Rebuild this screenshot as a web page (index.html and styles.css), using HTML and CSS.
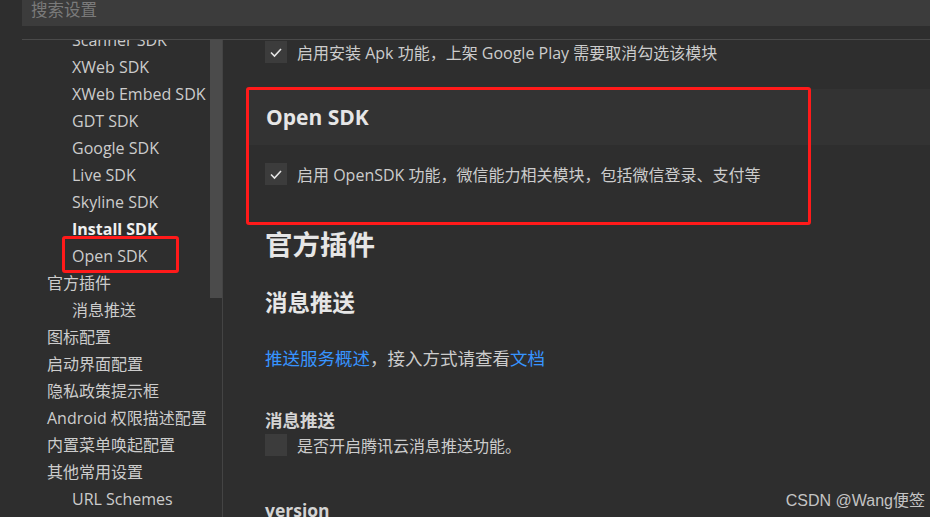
FILE: index.html
```html
<!DOCTYPE html>
<html lang="zh-CN">
<head>
    <meta charset="UTF-8">
    <meta name="viewport" content="width=device-width, initial-scale=1.0">
    <title>设置</title>
    <link rel="stylesheet" href="styles.css">
</head>
<body>
    <div class="search"><span class="placeholder">搜索设置</span></div>
    <div class="main">
        <div class="sidebar">
            <ul class="tree">
                <li class="sub">Scanner SDK</li>
                <li class="sub">XWeb SDK</li>
                <li class="sub">XWeb Embed SDK</li>
                <li class="sub">GDT SDK</li>
                <li class="sub">Google SDK</li>
                <li class="sub">Live SDK</li>
                <li class="sub">Skyline SDK</li>
                <li class="sub active">Install SDK</li>
                <li class="sub">Open SDK</li>
                <li>官方插件</li>
                <li class="sub">消息推送</li>
                <li>图标配置</li>
                <li>启动界面配置</li>
                <li>隐私政策提示框</li>
                <li>Android 权限描述配置</li>
                <li>内置菜单唤起配置</li>
                <li>其他常用设置</li>
                <li class="sub">URL Schemes</li>
            </ul>
        </div>
        <div class="scrollbar"><div class="thumb"></div></div>
        <div class="content">
            <div class="check-row first">
                <span class="box">
                    <svg width="22" height="22" viewBox="0 0 22 22"><polyline points="6,11.5 9.5,15 16,8" fill="none" stroke="#e6e6e6" stroke-width="1.6"/></svg>
                </span>
                <span>启用安装 Apk 功能，上架 Google Play 需要取消勾选该模块</span>
            </div>

            <div class="group">
                <div class="group-head">Open SDK</div>
                <div class="check-row">
                    <span class="box">
                        <svg width="22" height="22" viewBox="0 0 22 22"><polyline points="6,11.5 9.5,15 16,8" fill="none" stroke="#e6e6e6" stroke-width="1.6"/></svg>
                    </span>
                    <span>启用 OpenSDK 功能，微信能力相关模块，包括微信登录、支付等</span>
                </div>
            </div>

            <h1 class="h-big">官方插件</h1>
            <h2 class="h-mid">消息推送</h2>
            <p class="desc"><a href="#">推送服务概述</a>，接入方式请查看<a href="#">文档</a></p>
            <h3 class="h-small">消息推送</h3>
            <div class="check-row">
                <span class="box"></span>
                <span>是否开启腾讯云消息推送功能。</span>
            </div>
            <h3 class="h-small version">version</h3>
        </div>
    </div>

    <div class="mark mark-side"></div>
    <div class="mark mark-group"></div>
    <div class="watermark">CSDN @Wang便签</div>
</body>
</html>
```

FILE: styles.css
```css
* {
    margin: 0;
    padding: 0;
    box-sizing: border-box;
}
body {
    background: #2e2e2e;
    color: #cccccc;
    font-family: "Open Sans", "Noto Sans CJK SC", sans-serif;
    font-size: 16px;
    height: 517px;
    overflow: hidden;
    position: relative;
}
.search {
    margin-left: 22px;
    height: 26px;
    background: #3c3c3c;
    padding-left: 9px;
    line-height: 20px;
}
.placeholder {
    color: #7a7a7a;
    font-size: 16.5px;
}
.main {
    display: flex;
    margin-top: 13px;
    margin-left: 22px;
    border-top: 1px solid #4a4a4a;
    height: 478px;
}
.sidebar {
    margin-left: -22px;
    padding-left: 22px;
    overflow: hidden;
    width: 210px;
}
.tree {
    list-style: none;
    margin-top: -13px;
}
.tree li {
    height: 27px;
    line-height: 27px;
    padding-left: 25px;
    white-space: nowrap;
    color: #cccccc;
}
.tree li.sub {
    padding-left: 50px;
}
.tree li.active {
    font-weight: 700;
    color: #f0f0f0;
}
.scrollbar {
    width: 13px;
    border-right: 1px solid #444;
}
.thumb {
    height: 258px;
    width: 12px;
    background: #4b4b4b;
}
.content {
    flex: 1;
    padding-left: 42px;
    overflow: hidden;
}
.check-row {
    display: flex;
    align-items: center;
    gap: 10px;
    height: 22px;
    white-space: nowrap;
    color: #cccccc;
}
.check-row.first {
    margin-top: 1px;
}
.box {
    width: 22px;
    height: 22px;
    background: #3c3c3c;
    flex: none;
    display: flex;
}
.group {
    margin-top: 26px;
    margin-left: -17px;
    padding-left: 17px;
    padding-bottom: 39px;
}
.group-head {
    height: 56px;
    line-height: 56px;
    margin-left: -17px;
    padding-left: 18px;
    background: #333333;
    font-size: 21px;
    font-weight: 700;
    color: #e6e6e6;
    margin-bottom: 18px;
}
.h-big {
    margin-top: 4px;
    font-size: 27.5px;
    line-height: 34px;
    font-weight: 700;
    color: #e6e6e6;
}
.h-mid {
    margin-top: 26px;
    font-size: 22.5px;
    line-height: 30px;
    font-weight: 700;
    color: #e6e6e6;
}
.desc {
    margin-top: 28px;
    font-size: 17.5px;
    line-height: 24px;
    color: #cccccc;
}
.desc a {
    color: #3794ff;
    text-decoration: none;
}
.h-small {
    margin-top: 39px;
    font-size: 17.5px;
    line-height: 22px;
    font-weight: 700;
    color: #d4d4d4;
    margin-bottom: 3px;
}
.h-small.version {
    margin-top: 43px;
}
.mark {
    position: absolute;
    border: 3px solid #ff1a1a;
    border-radius: 3px;
}
.mark-side {
    left: 62px;
    top: 236px;
    width: 117px;
    height: 37px;
}
.mark-group {
    left: 246px;
    top: 87px;
    width: 565px;
    height: 138px;
}
.watermark {
    position: absolute;
    right: 5px;
    bottom: 6px;
    font-family: "Liberation Sans", "Noto Sans CJK SC", sans-serif;
    font-size: 16px;
    color: #c4c4c4;
}
```
